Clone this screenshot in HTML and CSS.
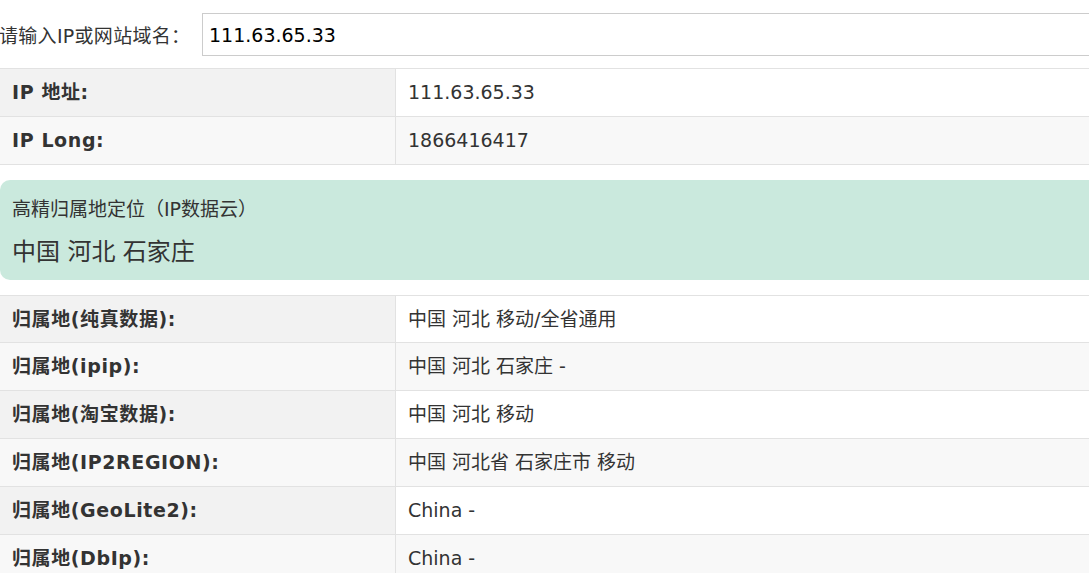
FILE: index.html
```html
<!DOCTYPE html>
<html>

<head>
  <meta charset="UTF-8">
  <meta name="viewport" content="width=device-width, initial-scale=1.0">
  <title>IP查询</title>
  <link rel="stylesheet" href="styles.css">
</head>

<body>
  <div class="page">
    <form class="search-row">
      <label class="search-label" for="ip">请输入IP或网站域名：</label>
      <input class="search-input" id="ip" type="text" value="111.63.65.33">
    </form>

    <table class="info-table">
      <tbody>
        <tr>
          <td class="key">IP 地址:</td>
          <td>111.63.65.33</td>
        </tr>
        <tr>
          <td class="key">IP Long:</td>
          <td>1866416417</td>
        </tr>
      </tbody>
    </table>

    <div class="locate-box">
      <div class="locate-title">高精归属地定位（IP数据云）</div>
      <div class="locate-result">中国 河北 石家庄</div>
    </div>

    <table class="info-table">
      <tbody>
        <tr>
          <td class="key">归属地(纯真数据):</td>
          <td>中国 河北 移动/全省通用</td>
        </tr>
        <tr>
          <td class="key">归属地(ipip):</td>
          <td>中国 河北 石家庄 -</td>
        </tr>
        <tr>
          <td class="key">归属地(淘宝数据):</td>
          <td>中国 河北 移动</td>
        </tr>
        <tr>
          <td class="key">归属地(IP2REGION):</td>
          <td>中国 河北省 石家庄市 移动</td>
        </tr>
        <tr>
          <td class="key">归属地(GeoLite2):</td>
          <td>China -</td>
        </tr>
        <tr>
          <td class="key">归属地(DbIp):</td>
          <td>China -</td>
        </tr>
      </tbody>
    </table>
  </div>
</body>

</html>
```

FILE: styles.css
```css
html,
body {
  margin: 0;
  padding: 0;
  overflow: hidden;
  background: #fff;
}

body {
  font-family: "DejaVu Sans", "Noto Sans CJK SC", sans-serif;
  font-size: 19px;
  color: #333;
}

.page {
  width: 1100px;
}

.search-row {
  display: flex;
  align-items: center;
  padding-top: 13px;
  margin: 0;
}

.search-label {
  width: 203px;
  font-size: 19px;
  letter-spacing: 0.3px;
  color: #333;
  margin-left: -1px;
}

.search-input {
  flex: 1;
  height: 43px;
  box-sizing: border-box;
  border: 1px solid #ccc;
  padding: 0 6px;
  font-family: "DejaVu Sans", sans-serif;
  font-size: 19px;
  color: #000;
  outline: none;
}

.info-table {
  width: 100%;
  border-collapse: collapse;
  margin-top: 12px;
}

.info-table td {
  border-top: 1px solid #e2e2e2;
  border-bottom: 1px solid #e2e2e2;
  padding: 12px 12px;
  line-height: 22.8px;
  background: #fff;
}

.info-table tr:nth-child(even) td {
  background: #f8f8f8;
}

.info-table td.key {
  width: 371px;
  font-weight: bold;
  letter-spacing: 0.6px;
  background: #f2f2f2;
  border-right: 1px solid #e2e2e2;
}

.locate-box {
  margin: 15px 0;
  height: 100px;
  box-sizing: border-box;
  padding: 16px 12px 0;
  background: #cae9dd;
  border-radius: 10px;
}

.locate-title {
  font-family: "DejaVu Sans", "Noto Sans CJK SC", sans-serif;
  font-size: 19px;
  line-height: 26px;
}

.locate-result {
  font-family: "Noto Sans CJK SC", sans-serif;
  font-size: 24px;
  line-height: 32px;
  word-spacing: 2px;
  margin-top: 12px;
}

.locate-box + .info-table {
  margin-top: 0;
}
```
